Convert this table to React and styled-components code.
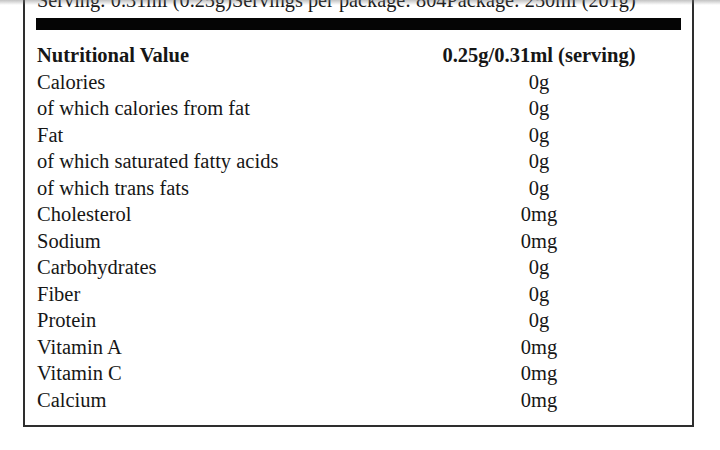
import React from "react";
import styled, { createGlobalStyle } from "styled-components";

const GlobalStyle = createGlobalStyle`
  html, body {
    margin: 0;
    padding: 0;
    background: #ffffff;
    overflow: hidden;
  }
  body {
    font-family: "Liberation Serif", "Times New Roman", serif;
    color: #161616;
  }
`;

const Page = styled.div`
  position: relative;
  width: 720px;
  height: 450px;
  overflow: hidden;
  background: #fff;

  &::after {
    content: "";
    position: absolute;
    left: 0;
    right: 0;
    top: 0;
    height: 5px;
    background: linear-gradient(to bottom, rgba(120, 120, 120, 0.45), rgba(200, 200, 200, 0));
    pointer-events: none;
  }
`;

const Label = styled.section`
  margin: -15px 0 0 23px;
  border: 2px solid #2e2e2e;
  padding: 0 11px 12px 11px;
  box-sizing: content-box;
  width: 645px;
`;

const ServingLine = styled.div`
  font-size: 20.3px;
  line-height: 26px;
  padding-left: 1px;
  white-space: nowrap;
  margin-bottom: 5px;
`;

const ThickBar = styled.div`
  height: 12px;
  background: #050505;
  margin-bottom: 12px;
`;

const Table = styled.div`
  display: grid;
  grid-template-columns: 1fr 200px;
  padding: 0 42px 0 1px;
  font-size: 20.5px;
  line-height: 26.5px;
`;

const Cell = styled.div`
  font-weight: ${(p) => (p.$head ? 700 : 400)};
  text-align: ${(p) => (p.$value ? "center" : "left")};
  white-space: nowrap;
`;

const rows = [
  ["Calories", "0g"],
  ["of which calories from fat", "0g"],
  ["Fat", "0g"],
  ["of which saturated fatty acids", "0g"],
  ["of which trans fats", "0g"],
  ["Cholesterol", "0mg"],
  ["Sodium", "0mg"],
  ["Carbohydrates", "0g"],
  ["Fiber", "0g"],
  ["Protein", "0g"],
  ["Vitamin A", "0mg"],
  ["Vitamin C", "0mg"],
  ["Calcium", "0mg"],
];

export default function App() {
  return (
    <>
      <GlobalStyle />
      <Page>
        <Label>
          <ServingLine>
            Serving: 0.31ml (0.25g)Servings per package: 804Package: 250ml (201g)
          </ServingLine>
          <ThickBar />
          <Table>
            <Cell $head>Nutritional Value</Cell>
            <Cell $head $value>0.25g/0.31ml (serving)</Cell>
            {rows.map(([name, val]) => (
              <React.Fragment key={name}>
                <Cell>{name}</Cell>
                <Cell $value>{val}</Cell>
              </React.Fragment>
            ))}
          </Table>
        </Label>
      </Page>
    </>
  );
}
